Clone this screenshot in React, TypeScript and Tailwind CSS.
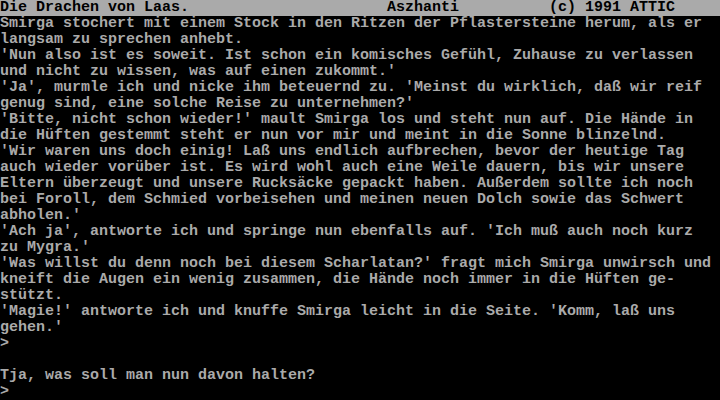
import * as React from "react";

const LINES = [
  "Smirga stochert mit einem Stock in den Ritzen der Pflastersteine herum, als er",
  "langsam zu sprechen anhebt.",
  "'Nun also ist es soweit. Ist schon ein komisches Gefühl, Zuhause zu verlassen",
  "und nicht zu wissen, was auf einen zukommt.'",
  "'Ja', murmle ich und nicke ihm beteuernd zu. 'Meinst du wirklich, daß wir reif",
  "genug sind, eine solche Reise zu unternehmen?'",
  "'Bitte, nicht schon wieder!' mault Smirga los und steht nun auf. Die Hände in",
  "die Hüften gestemmt steht er nun vor mir und meint in die Sonne blinzelnd.",
  "'Wir waren uns doch einig! Laß uns endlich aufbrechen, bevor der heutige Tag",
  "auch wieder vorüber ist. Es wird wohl auch eine Weile dauern, bis wir unsere",
  "Eltern überzeugt und unsere Rucksäcke gepackt haben. Außerdem sollte ich noch",
  "bei Foroll, dem Schmied vorbeisehen und meinen neuen Dolch sowie das Schwert",
  "abholen.'",
  "'Ach ja', antworte ich und springe nun ebenfalls auf. 'Ich muß auch noch kurz",
  "zu Mygra.'",
  "'Was willst du denn noch bei diesem Scharlatan?' fragt mich Smirga unwirsch und",
  "kneift die Augen ein wenig zusammen, die Hände noch immer in die Hüften ge-",
  "stützt.",
  "'Magie!' antworte ich und knuffe Smirga leicht in die Seite. 'Komm, laß uns",
  "gehen.'",
  ">",
  "",
  "Tja, was soll man nun davon halten?",
  ">",
];

export default function App() {
  return (
    <div className="w-[720px] h-[400px] bg-black overflow-hidden font-['Liberation_Mono',monospace] text-[15px] leading-4 font-bold">
      {/* status bar */}
      <div className="flex h-4 bg-[#aaaaaa] text-black whitespace-pre">
        <span className="w-[387px]">Die Drachen von Laas.</span>
        <span className="w-[162px]">Aszhanti</span>
        <span>(c) 1991 ATTIC</span>
      </div>
      <div className="text-[#aaaaaa]">
        {LINES.map((line, i) => (
          <div key={i} className="h-4 whitespace-pre">
            {line}
          </div>
        ))}
      </div>
    </div>
  );
}
